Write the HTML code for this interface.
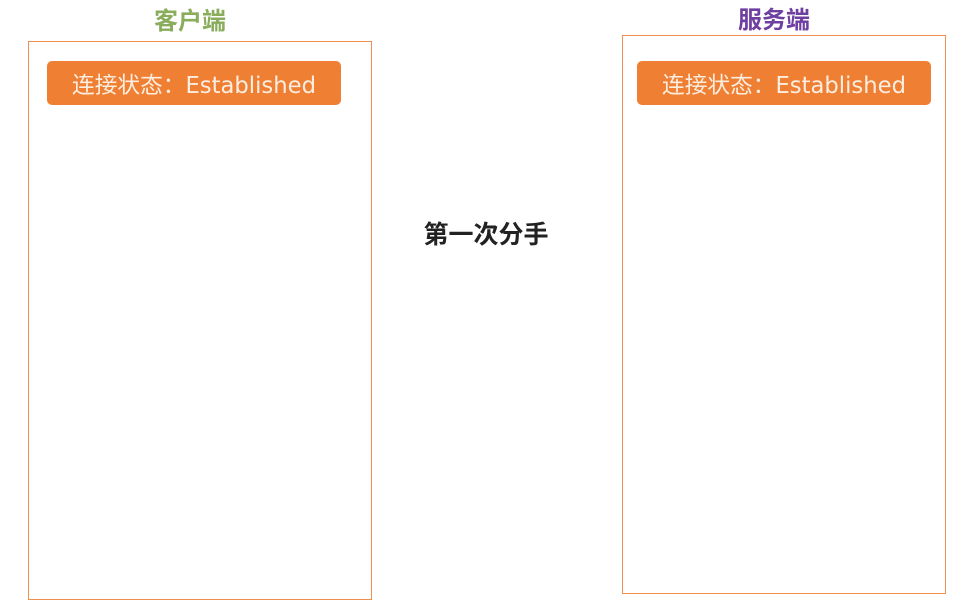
<!DOCTYPE html>
<html><head><meta charset="utf-8"><style>
body{margin:0;width:962px;height:610px;background:#fff;position:relative;overflow:hidden;font-family:"Liberation Sans","Noto Sans CJK SC",sans-serif}
.t{position:absolute;font-size:24px;font-weight:bold;line-height:26px;text-align:center;width:140px}
.box{position:absolute;border:1.5px solid #f09050;box-sizing:border-box}
.btn{position:absolute;background:#ef7f33;border-radius:5px;color:#fbeee0;font-size:22.7px;line-height:44px;height:44px;width:294px;text-align:center;font-family:"DejaVu Sans","Noto Sans CJK SC",sans-serif;box-sizing:border-box;padding-top:3px}
</style></head><body>
<div class="t" style="left:120px;top:9px;color:#8aad5c">客户端</div>
<div class="t" style="left:704px;top:8px;color:#6e3ea0">服务端</div>
<div class="box" style="left:28px;top:41px;width:344px;height:559px"></div>
<div class="box" style="left:622px;top:35px;width:324px;height:559px"></div>
<div class="btn" style="left:47px;top:61px">连接状态：Established</div>
<div class="btn" style="left:637px;top:61px">连接状态：Established</div>
<div style="position:absolute;left:406px;top:221px;width:160px;text-align:center;font-size:25px;font-weight:bold;color:#222;line-height:28px">第一次分手</div>
</body></html>
